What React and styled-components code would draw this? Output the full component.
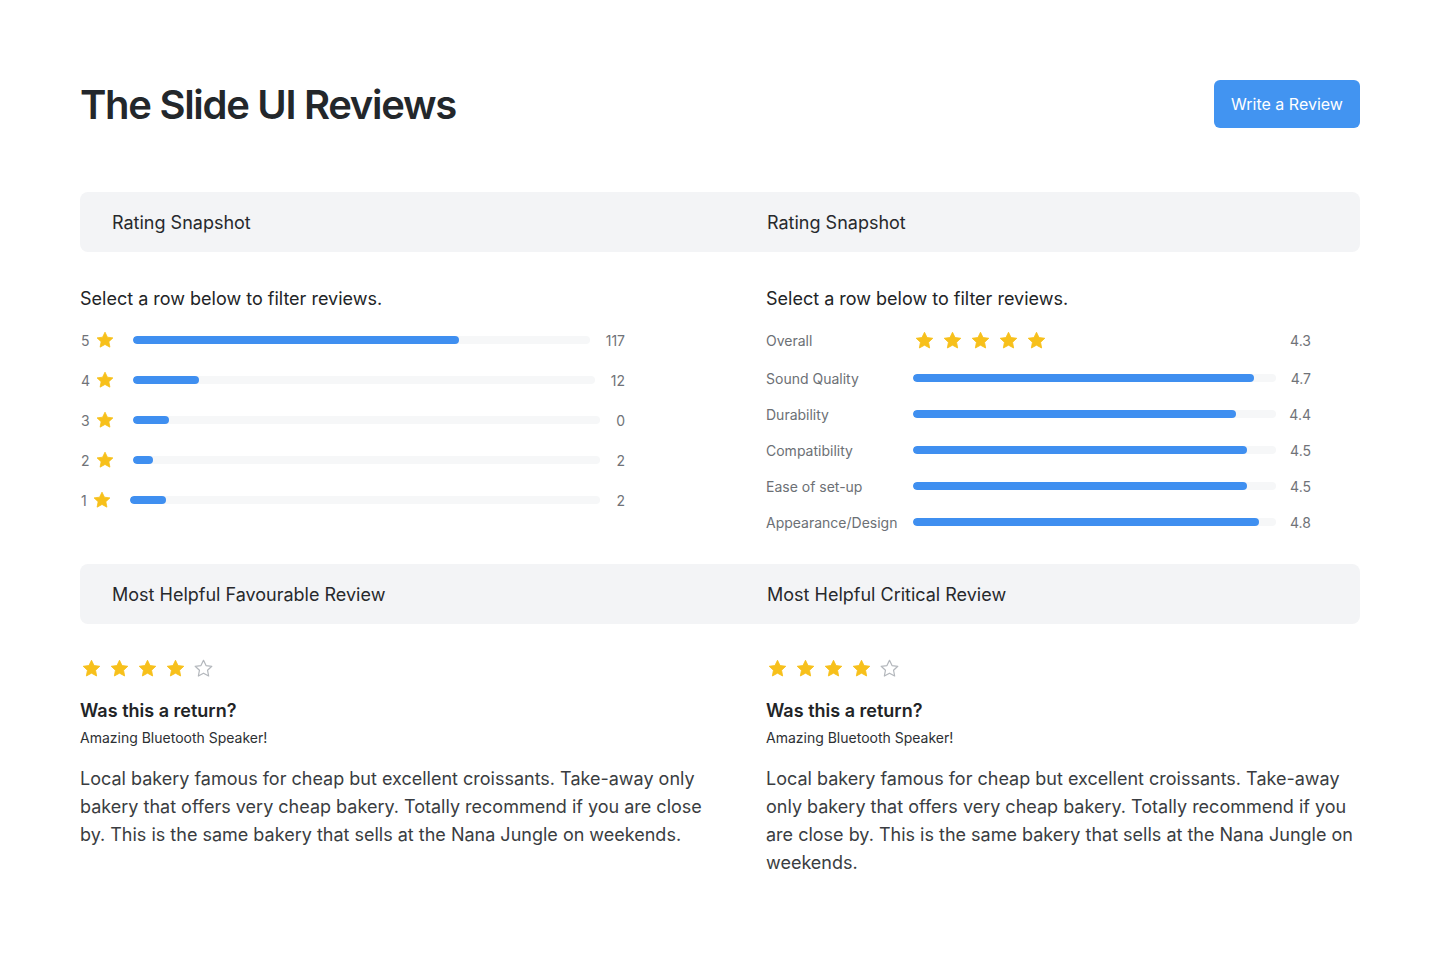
import styled, { createGlobalStyle } from 'styled-components'

const GlobalStyle = createGlobalStyle`
	body {
		margin: 0;
		background: #ffffff;
		font-family: Inter, 'Noto Sans', sans-serif;
		color: #26292d;
	}
`

const breakdown = [
	{ stars: 5, count: 117, pct: 71.4 },
	{ stars: 4, count: 12, pct: 14.3 },
	{ stars: 3, count: 0, pct: 7.7 },
	{ stars: 2, count: 2, pct: 4.3 },
	{ stars: 1, count: 2, pct: 7.7 },
]

const features = [
	{ label: 'Sound Quality', value: '4.7', pct: 94 },
	{ label: 'Durability', value: '4.4', pct: 89 },
	{ label: 'Compatibility', value: '4.5', pct: 92 },
	{ label: 'Ease of set-up', value: '4.5', pct: 92 },
	{ label: 'Appearance/Design', value: '4.8', pct: 95.3 },
]

const reviewText =
	'Local bakery famous for cheap but excellent croissants. Take-away only bakery that offers very cheap bakery. Totally recommend if you are close by. This is the same bakery that sells at the Nana Jungle on weekends.'

const STAR_PATH =
	'M12 2.6l2.9 6.05 6.6.8-4.87 4.56 1.24 6.55L12 17.33 6.13 20.56l1.24-6.55L2.5 9.45l6.6-.8z'

const Star = ({ size = 18, empty }) => (
	<StarSvg width={size} height={size} viewBox='0 0 24 24' $empty={empty}>
		<path d={STAR_PATH} />
	</StarSvg>
)

const Stars = ({ count, total = 5, size }) => (
	<StarRow>
		{Array.from({ length: total }).map((_, i) => (
			<Star key={i} size={size} empty={i >= count} />
		))}
	</StarRow>
)

const Bar = ({ pct }) => (
	<Track>
		<Fill style={{ width: `${pct}%` }} />
	</Track>
)

const App = () => {
	return (
		<>
			<GlobalStyle />
			<Page>
				<TopBar>
					<Title>The Slide UI Reviews</Title>
					<PrimaryButton>Write a Review</PrimaryButton>
				</TopBar>

				<SectionHeader>
					<HeaderCell>Rating Snapshot</HeaderCell>
					<HeaderCell $right>Rating Snapshot</HeaderCell>
				</SectionHeader>

				<Columns $top={35}>
					<Column>
						<Hint>Select a row below to filter reviews.</Hint>
						<RatingList>
							{breakdown.map((row) => (
								<StarBarRow key={row.stars}>
									<SmallNum>{row.stars}</SmallNum>
									<Star size={20} />
									<Bar pct={row.pct} />
									<SmallNum>{row.count}</SmallNum>
								</StarBarRow>
							))}
						</RatingList>
					</Column>
					<Column $right>
						<Hint>Select a row below to filter reviews.</Hint>
						<RatingList>
							<FeatureRow $tall>
								<FeatureLabel>Overall</FeatureLabel>
								<OverallStars>
									<Stars count={5} size={21} />
								</OverallStars>
								<Value>4.3</Value>
							</FeatureRow>
							{features.map((f) => (
								<FeatureRow key={f.label}>
									<FeatureLabel>{f.label}</FeatureLabel>
									<Bar pct={f.pct} />
									<Value>{f.value}</Value>
								</FeatureRow>
							))}
						</RatingList>
					</Column>
				</Columns>

				<SectionHeader>
					<HeaderCell>Most Helpful Favourable Review</HeaderCell>
					<HeaderCell $right>Most Helpful Critical Review</HeaderCell>
				</SectionHeader>

				<Columns $top={34}>
					<Column>
						<ReviewStars>
							<Stars count={4} size={21} />
						</ReviewStars>
						<ReviewTitle>Was this a return?</ReviewTitle>
						<ReviewSub>Amazing Bluetooth Speaker!</ReviewSub>
						<ReviewBody>{reviewText}</ReviewBody>
					</Column>
					<Column $right>
						<ReviewStars>
							<Stars count={4} size={21} />
						</ReviewStars>
						<ReviewTitle>Was this a return?</ReviewTitle>
						<ReviewSub>Amazing Bluetooth Speaker!</ReviewSub>
						<ReviewBody>{reviewText}</ReviewBody>
					</Column>
				</Columns>
			</Page>
		</>
	)
}
export default App

const Page = styled.div`
	width: 1280px;
	margin: 0 auto;
	padding: 80px 0 60px;
`

const TopBar = styled.div`
	display: flex;
	justify-content: space-between;
	align-items: center;
	height: 48px;
	margin-bottom: 64px;
`

const Title = styled.h1`
	margin: 0;
	font-size: 40px;
	font-weight: 600;
	letter-spacing: -1.3px;
	color: #23272b;
`

const PrimaryButton = styled.button`
	height: 48px;
	width: 146px;
	border: none;
	border-radius: 6px;
	background: #4294f1;
	color: #ffffff;
	font-family: Inter, sans-serif;
	font-size: 16px;
	cursor: pointer;
`

const SectionHeader = styled.div`
	display: grid;
	grid-template-columns: 640px 640px;
	align-items: center;
	height: 60px;
	background: #f3f4f6;
	border-radius: 8px;
`

const HeaderCell = styled.div`
	padding-left: ${({ $right }) => ($right ? '47px' : '32px')};
	font-size: 18px;
	color: #27292c;
`

const Columns = styled.div`
	display: grid;
	grid-template-columns: 640px 640px;
	padding: ${({ $top }) => $top}px 0 24px;
`

const Column = styled.div`
	padding-left: ${({ $right }) => ($right ? '46px' : '0')};
`

const Hint = styled.p`
	margin: 0 0 9px;
	font-size: 18px;
	line-height: 24px;
	color: #222426;
`

const RatingList = styled.div`
	width: 545px;
	display: flex;
	flex-direction: column;
`

const StarBarRow = styled.div`
	display: flex;
	align-items: center;
	height: 40px;
	gap: 5px;
	& > svg {
		margin-right: 13px;
	}
	& > div {
		margin-right: 10px;
	}
`

const SmallNum = styled.span`
	font-size: 14px;
	color: #707378;
	padding-left: 1px;
`

const StarSvg = styled.svg`
	flex: none;
	display: block;
	path {
		fill: ${({ $empty }) => ($empty ? 'none' : '#f7c01b')};
		stroke: ${({ $empty }) => ($empty ? '#b3b7bc' : '#f7c01b')};
		stroke-width: ${({ $empty }) => ($empty ? '1.4' : '1')};
		stroke-linejoin: round;
	}
`

const StarRow = styled.div`
	display: flex;
	align-items: center;
	gap: 7px;
`

const Track = styled.div`
	flex: 1;
	height: 8px;
	border-radius: 4px;
	background: #f6f7f8;
	overflow: hidden;
`

const Fill = styled.div`
	height: 100%;
	border-radius: 4px;
	background: #3f8ff0;
`

const FeatureRow = styled.div`
	display: flex;
	align-items: center;
	height: ${({ $tall }) => ($tall ? '40px' : '36px')};
`

const FeatureLabel = styled.span`
	width: 147px;
	flex: none;
	font-size: 14px;
	color: #6c7075;
`

const OverallStars = styled.div`
	flex: 1;
	padding-left: 1px;
`

const Value = styled.span`
	width: 35px;
	flex: none;
	text-align: right;
	font-size: 14px;
	color: #707378;
`

const ReviewStars = styled.div`
	height: 20px;
	display: flex;
	align-items: center;
	margin-bottom: 21px;
	margin-left: 1px;
`

const ReviewTitle = styled.h3`
	margin: 0 0 6px;
	font-size: 18px;
	line-height: 24px;
	font-weight: 600;
	color: #222426;
`

const ReviewSub = styled.p`
	margin: 0 0 18px;
	font-size: 14px;
	line-height: 18px;
	color: #2d3033;
`

const ReviewBody = styled.p`
	margin: 0;
	font-size: 18px;
	line-height: 28px;
	color: #3a3d41;
`
